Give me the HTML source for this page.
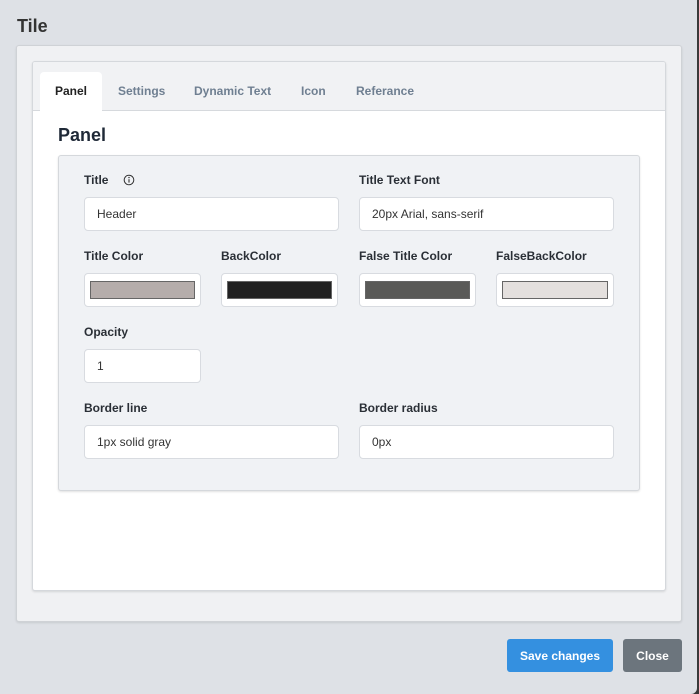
<!DOCTYPE html>
<html><head><style>
*{box-sizing:border-box;margin:0;padding:0}
html,body{width:699px;height:688px;overflow:hidden;background:#3a3a3a;font-family:"Liberation Sans",Arial,sans-serif}
.modal{position:absolute;left:-6px;top:-6px;width:703px;height:700px;background:#dee1e6;border-radius:6px}
.abs{position:absolute}
.h{left:23px;top:22px;font-size:18px;font-weight:bold;color:#333}
.outer{left:22px;top:51px;width:666px;height:577px;background:#f0f1f3;border:1px solid #cfd2d6;border-radius:3px;box-shadow:0 1px 2px rgba(0,0,0,.1)}
.inner{left:15px;top:15px;width:634px;height:530px;background:#fff;border:1px solid #d5d8dc;border-radius:3px;box-shadow:0 1px 2px rgba(0,0,0,.12);overflow:hidden}
.tabs{left:0;top:0;width:100%;height:49px;background:#f1f2f4;border-bottom:1px solid #d6d9dd}
.tab{position:absolute;top:22px;font-size:12px;font-weight:bold;color:#6f7f91}
.act{left:7px;top:10px;width:62px;height:39px;background:#fff;border-radius:4px 4px 0 0}
.ph{left:25px;top:63px;font-size:18px;font-weight:bold;color:#1f2937}
.form{left:25px;top:93px;width:582px;height:336px;background:#f0f2f5;border:1px solid #d5d8dc;border-radius:3px;box-shadow:0 1px 2px rgba(0,0,0,.12)}
.lb{position:absolute;font-size:12px;font-weight:bold;color:#2a2f36}
.in{position:absolute;height:34px;background:#fff;border:1px solid #d8dbe0;border-radius:4px;font-size:12px;color:#333;padding:9px 0 0 12px}
.sw{position:absolute;left:5px;top:7px;right:5px;bottom:7px;border:1px solid #666}
.btn{position:absolute;top:645px;height:33px;border-radius:3px;color:#fff;font-size:12px;font-weight:bold;text-align:center;line-height:34px}
</style></head><body>
<div class="modal">
<div class="abs h">Tile</div>
<div class="abs outer">
 <div class="abs inner">
  <div class="abs tabs">
   <div class="abs act"></div>
   <div class="tab" style="left:22px;color:#222">Panel</div>
   <div class="tab" style="left:85px">Settings</div>
   <div class="tab" style="left:161px">Dynamic Text</div>
   <div class="tab" style="left:268px">Icon</div>
   <div class="tab" style="left:323px">Referance</div>
  </div>
  <div class="abs ph">Panel</div>
  <div class="abs form">
   <div class="lb" style="left:25px;top:17px">Title</div>
   <svg class="abs" style="left:64px;top:18px" width="12" height="12" viewBox="0 0 12 12"><circle cx="6" cy="6" r="4.8" fill="none" stroke="#333" stroke-width="1"/><line x1="6" y1="5.2" x2="6" y2="8.6" stroke="#333" stroke-width="1.1"/><circle cx="6" cy="3.6" r=".7" fill="#333"/></svg>
   <div class="lb" style="left:300px;top:17px">Title Text Font</div>
   <div class="in" style="left:25px;top:41px;width:255px">Header</div>
   <div class="in" style="left:300px;top:41px;width:255px">20px Arial, sans-serif</div>
   <div class="lb" style="left:25px;top:93px">Title Color</div>
   <div class="lb" style="left:162px;top:93px">BackColor</div>
   <div class="lb" style="left:300px;top:93px">False Title Color</div>
   <div class="lb" style="left:437px;top:93px">FalseBackColor</div>
   <div class="in" style="left:25px;top:117px;width:117px"><div class="sw" style="background:#b5adab"></div></div>
   <div class="in" style="left:162px;top:117px;width:117px"><div class="sw" style="background:#222"></div></div>
   <div class="in" style="left:300px;top:117px;width:117px"><div class="sw" style="background:#5a5a58"></div></div>
   <div class="in" style="left:437px;top:117px;width:118px"><div class="sw" style="background:#e4e0de"></div></div>
   <div class="lb" style="left:25px;top:169px">Opacity</div>
   <div class="in" style="left:25px;top:193px;width:117px">1</div>
   <div class="lb" style="left:25px;top:245px">Border line</div>
   <div class="lb" style="left:300px;top:245px">Border radius</div>
   <div class="in" style="left:25px;top:269px;width:255px">1px solid gray</div>
   <div class="in" style="left:300px;top:269px;width:255px">0px</div>
  </div>
 </div>
</div>
<div class="btn" style="left:513px;width:106px;background:#3490e0">Save changes</div>
<div class="btn" style="left:629px;width:59px;background:#6c757d">Close</div>
</div>
</body></html>
